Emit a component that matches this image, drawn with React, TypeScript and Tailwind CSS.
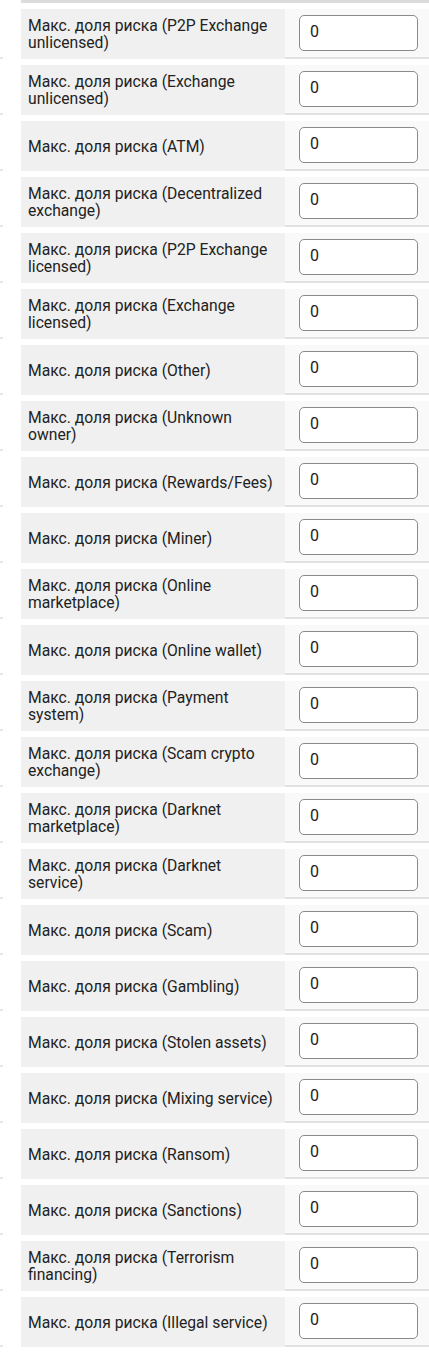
const categories = [
  "P2P Exchange unlicensed",
  "Exchange unlicensed",
  "ATM",
  "Decentralized exchange",
  "P2P Exchange licensed",
  "Exchange licensed",
  "Other",
  "Unknown owner",
  "Rewards/Fees",
  "Miner",
  "Online marketplace",
  "Online wallet",
  "Payment system",
  "Scam crypto exchange",
  "Darknet marketplace",
  "Darknet service",
  "Scam",
  "Gambling",
  "Stolen assets",
  "Mixing service",
  "Ransom",
  "Sanctions",
  "Terrorism financing",
  "Illegal service",
]

function RiskRow({ name }: { name: string }) {
  return (
    <div className="mt-[6px] flex h-[50px]">
      <div className="w-[3px] shrink-0 border-b-2 border-[#e6e6e6] bg-white" />
      <div className="w-[18px] shrink-0" />
      <div className="flex w-[264px] shrink-0 items-center bg-[#f0f0f0] px-[7px] text-[15.7px] font-normal leading-[17px] text-[#222]">
        Макс. доля риска ({name})
      </div>
      <div className="flex h-[50px] flex-1 items-start border-b-2 border-[#e2e2e2] bg-[#f9f9f9] pl-[14px] pt-[6px]">
        <input
          type="text"
          defaultValue="0"
          className="h-[36px] w-[119px] rounded-[5px] border border-[#8a8a8a] bg-white px-[10px] pb-[3px] text-[16px] text-[#222] outline-none"
        />
      </div>
    </div>
  )
}

export default function App() {
  return (
    <div className="h-[1352px] w-[429px] overflow-hidden bg-white font-['Roboto',sans-serif]">
      <div className="ml-[21px] h-[3px] bg-[#dcdcdc]" />
      {categories.map((c) => (
        <RiskRow key={c} name={c} />
      ))}
    </div>
  )
}
